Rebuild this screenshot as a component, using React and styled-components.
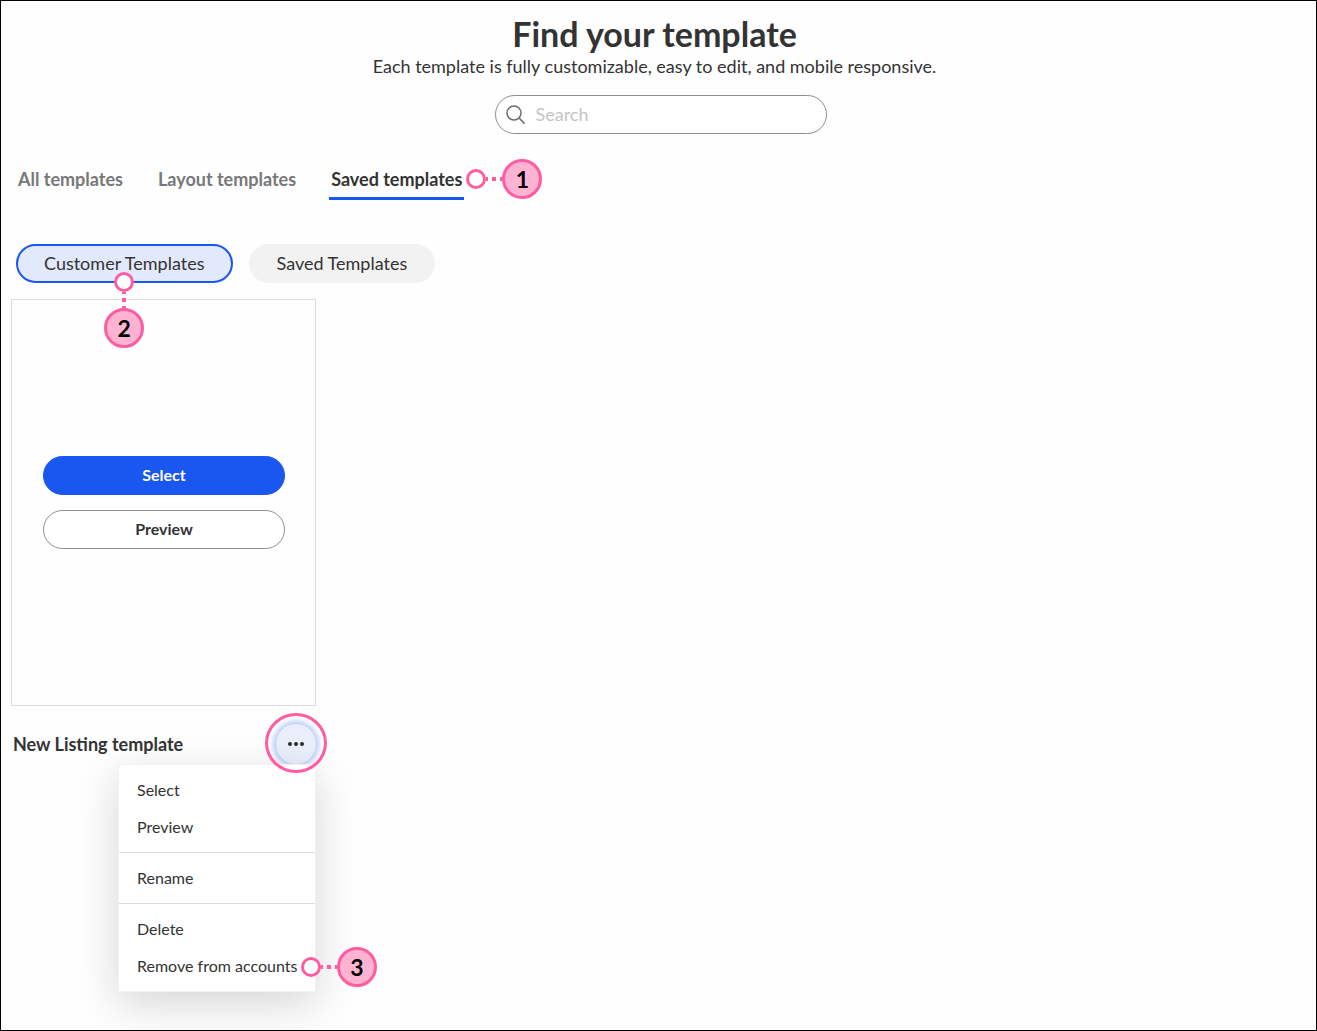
import { useState } from "react";
import styled, { createGlobalStyle, css } from "styled-components";

const GlobalStyle = createGlobalStyle`
  :root {
    --primary: #1a56f0;
    --text: #333333;
    --muted: #77787a;
    --line: #dcdcdc;
    --pink: #ff5ca1;
    --pinkLight: #ffb3d3;
  }
  * {
    box-sizing: border-box;
  }
  body {
    margin: 0;
    background: #fefefe;
    color: var(--text);
    font-family: Lato, "Open Sans", sans-serif;
  }
  button,
  input {
    font-family: inherit;
    color: inherit;
  }
`;

const Page = styled.main`
  min-height: 100vh;
  padding: 15px 10px;
  border: 1px solid #000;
`;

const Header = styled.header`
  display: flex;
  flex-direction: column;
  align-items: center;
  padding-right: 8px;
`;

const Title = styled.h1`
  margin: 0;
  font-size: 34px;
  line-height: 36px;
  font-weight: 700;
`;

const Subtitle = styled.p`
  margin: 4px 0 19px;
  font-size: 18px;
  line-height: 20px;
`;

const SearchBox = styled.label`
  display: flex;
  align-items: center;
  gap: 10px;
  width: 332px;
  height: 39px;
  margin-left: 12px;
  padding: 0 10px;
  border: 1px solid #8f8f8f;
  border-radius: 20px;
  background: #fff;
  svg {
    flex: none;
  }
`;

const SearchInput = styled.input`
  flex: 1;
  min-width: 0;
  padding: 0 0 2px;
  border: 0;
  outline: 0;
  background: transparent;
  font-size: 18px;
  &::placeholder {
    color: #c4c4c4;
    opacity: 1;
  }
`;

const Tabs = styled.nav`
  display: flex;
  gap: 31px;
  margin-top: 33px;
  padding-left: 5px;
`;

const Anchor = styled.div`
  position: relative;
`;

const Tab = styled.button`
  display: block;
  padding: 0 2px 6px;
  border: 0;
  border-bottom: 3px solid transparent;
  background: none;
  color: var(--muted);
  font-size: 18px;
  line-height: 24px;
  font-weight: 700;
  ${(props) =>
    props.$active &&
    css`
      color: var(--text);
      border-color: var(--primary);
    `}
`;

const Chips = styled.div`
  display: flex;
  gap: 16px;
  margin-top: 44px;
  padding-left: 5px;
`;

const Chip = styled.button`
  display: block;
  height: 39px;
  padding: 0 26px 2px;
  border: 2px solid #f2f2f2;
  border-radius: 20px;
  background: #f2f2f2;
  font-size: 18px;
  ${(props) =>
    props.$active &&
    css`
      border-color: var(--primary);
      background: #e3e9fd;
    `}
`;

const TemplateItem = styled.article`
  width: 305px;
  margin-top: 16px;
`;

const Preview = styled.div`
  display: flex;
  flex-direction: column;
  justify-content: center;
  gap: 15px;
  height: 407px;
  padding: 0 30px 0 31px;
  border: 1px solid var(--line);
  background: #fefefe;
`;

const PillButton = styled.button`
  height: 39px;
  padding: 0 0 2px;
  border: 1px solid ${(props) => (props.$primary ? "var(--primary)" : "#8f8f8f")};
  border-radius: 20px;
  background: ${(props) => (props.$primary ? "var(--primary)" : "#fff")};
  color: ${(props) => (props.$primary ? "#fff" : "var(--text)")};
  font-size: 16px;
  font-weight: 700;
`;

const TemplateFooter = styled.div`
  position: relative;
  display: flex;
  align-items: center;
  justify-content: space-between;
  padding: 18px 0 0 2px;
`;

const TemplateName = styled.h2`
  margin: 0;
  font-size: 18px;
  line-height: 24px;
  font-weight: 700;
`;

const MoreButton = styled.button`
  display: flex;
  align-items: center;
  justify-content: center;
  width: 40px;
  height: 40px;
  padding: 0;
  border: 0;
  border-radius: 50%;
  background: #ebeffc;
  box-shadow: 0 0 5px 3px #b7cdfb;
`;

const Highlight = styled.span`
  position: absolute;
  z-index: 3;
  right: -11px;
  bottom: -9px;
  width: 62px;
  height: 60px;
  border: 3px solid var(--pink);
  border-radius: 50%;
  pointer-events: none;
`;

const Menu = styled.div`
  position: absolute;
  z-index: 2;
  top: 100%;
  right: 0;
  width: 198px;
  border: 1px solid #f2f2f2;
  background: #fff;
  box-shadow: 0 12px 40px rgba(0, 0, 0, 0.16);
`;

const MenuGroup = styled.div`
  padding: 7px 0 6px;
  & + & {
    border-top: 1px solid var(--line);
  }
`;

const MenuItem = styled.button`
  display: block;
  width: 100%;
  height: 37px;
  padding: 0 18px 2px;
  border: 0;
  background: none;
  font-size: 16px;
  text-align: left;
  white-space: nowrap;
`;

// numbered callout, sits on top of the control it points at
const Callout = styled.span`
  position: absolute;
  z-index: 4;
  display: flex;
  align-items: center;
  pointer-events: none;
  ${(props) =>
    props.$down
      ? css`
          top: 28px;
          left: 50%;
          flex-direction: column;
          transform: translateX(-50%);
        `
      : css`
          top: ${props.$top || "50%"};
          left: ${props.$left || "100%"};
          transform: translateY(-50%);
        `}
`;

const Dot = styled.span`
  width: 20px;
  height: 20px;
  border: 3px solid var(--pink);
  border-radius: 50%;
  background: #fff;
`;

const Dashes = styled.span`
  width: ${(props) => (props.$down ? "4px" : "16px")};
  height: ${(props) => (props.$down ? "16px" : "4px")};
  background: linear-gradient(
    ${(props) => (props.$down ? "180deg" : "90deg")},
    var(--pink) 0 2px,
    transparent 2px 6px,
    var(--pink) 6px 10px,
    transparent 10px 14px,
    var(--pink) 14px 16px
  );
`;

const Badge = styled.span`
  width: 40px;
  height: 40px;
  border: 3px solid var(--pink);
  border-radius: 50%;
  background: var(--pinkLight);
  color: #000;
  font-size: 23px;
  line-height: 34px;
  font-weight: 700;
  text-align: center;
`;

const Marker = ({ number, down, top, left }) => (
  <Callout $down={down} $top={top} $left={left}>
    <Dot />
    <Dashes $down={down} />
    <Badge>{number}</Badge>
  </Callout>
);

const tabs = ["All templates", "Layout templates", "Saved templates"];
const chips = ["Customer Templates", "Saved Templates"];
const menuGroups = [
  ["Select", "Preview"],
  ["Rename"],
  ["Delete", "Remove from accounts"],
];

const App = () => {
  const [tab, setTab] = useState("Saved templates");
  const [chip, setChip] = useState("Customer Templates");
  const [menuOpen, setMenuOpen] = useState(true);

  return (
    <Page>
      <GlobalStyle />
      <Header>
        <Title>Find your template</Title>
        <Subtitle>
          Each template is fully customizable, easy to edit, and mobile
          responsive.
        </Subtitle>
        <SearchBox>
          <svg width="20" height="20" viewBox="0 0 20 20" fill="none" stroke="#6b6b6b" strokeWidth="1.5" aria-hidden="true">
            <circle cx="8" cy="8" r="7" />
            <path d="M13 13l5.6 5.6" />
          </svg>
          <SearchInput type="search" placeholder="Search" aria-label="Search" />
        </SearchBox>
      </Header>

      <Tabs>
        {tabs.map((name) => (
          <Anchor key={name}>
            <Tab type="button" $active={tab === name} onClick={() => setTab(name)}>
              {name}
            </Tab>
            {name === "Saved templates" && (
              <Marker number={1} top="12px" left="calc(100% + 2px)" />
            )}
          </Anchor>
        ))}
      </Tabs>

      <Chips>
        {chips.map((name) => (
          <Anchor key={name}>
            <Chip type="button" $active={chip === name} onClick={() => setChip(name)}>
              {name}
            </Chip>
            {name === "Customer Templates" && <Marker number={2} down />}
          </Anchor>
        ))}
      </Chips>

      <TemplateItem>
        <Preview>
          <PillButton type="button" $primary>
            Select
          </PillButton>
          <PillButton type="button">Preview</PillButton>
        </Preview>
        <TemplateFooter>
          <TemplateName>New Listing template</TemplateName>
          <MoreButton
            type="button"
            aria-label="More options"
            onClick={() => setMenuOpen(!menuOpen)}
          >
            <svg width="18" height="4" viewBox="0 0 18 4" fill="#2d2d2d" aria-hidden="true">
              <circle cx="3" cy="2" r="2" />
              <circle cx="9" cy="2" r="2" />
              <circle cx="15" cy="2" r="2" />
            </svg>
          </MoreButton>
          <Highlight />
          {menuOpen && (
            <Menu>
              {menuGroups.map((group) => (
                <MenuGroup key={group[0]}>
                  {group.map((item) => (
                    <Anchor key={item}>
                      <MenuItem type="button">{item}</MenuItem>
                      {item === "Remove from accounts" && (
                        <Marker number={3} left="calc(100% - 14px)" />
                      )}
                    </Anchor>
                  ))}
                </MenuGroup>
              ))}
            </Menu>
          )}
        </TemplateFooter>
      </TemplateItem>
    </Page>
  );
};

export default App;
